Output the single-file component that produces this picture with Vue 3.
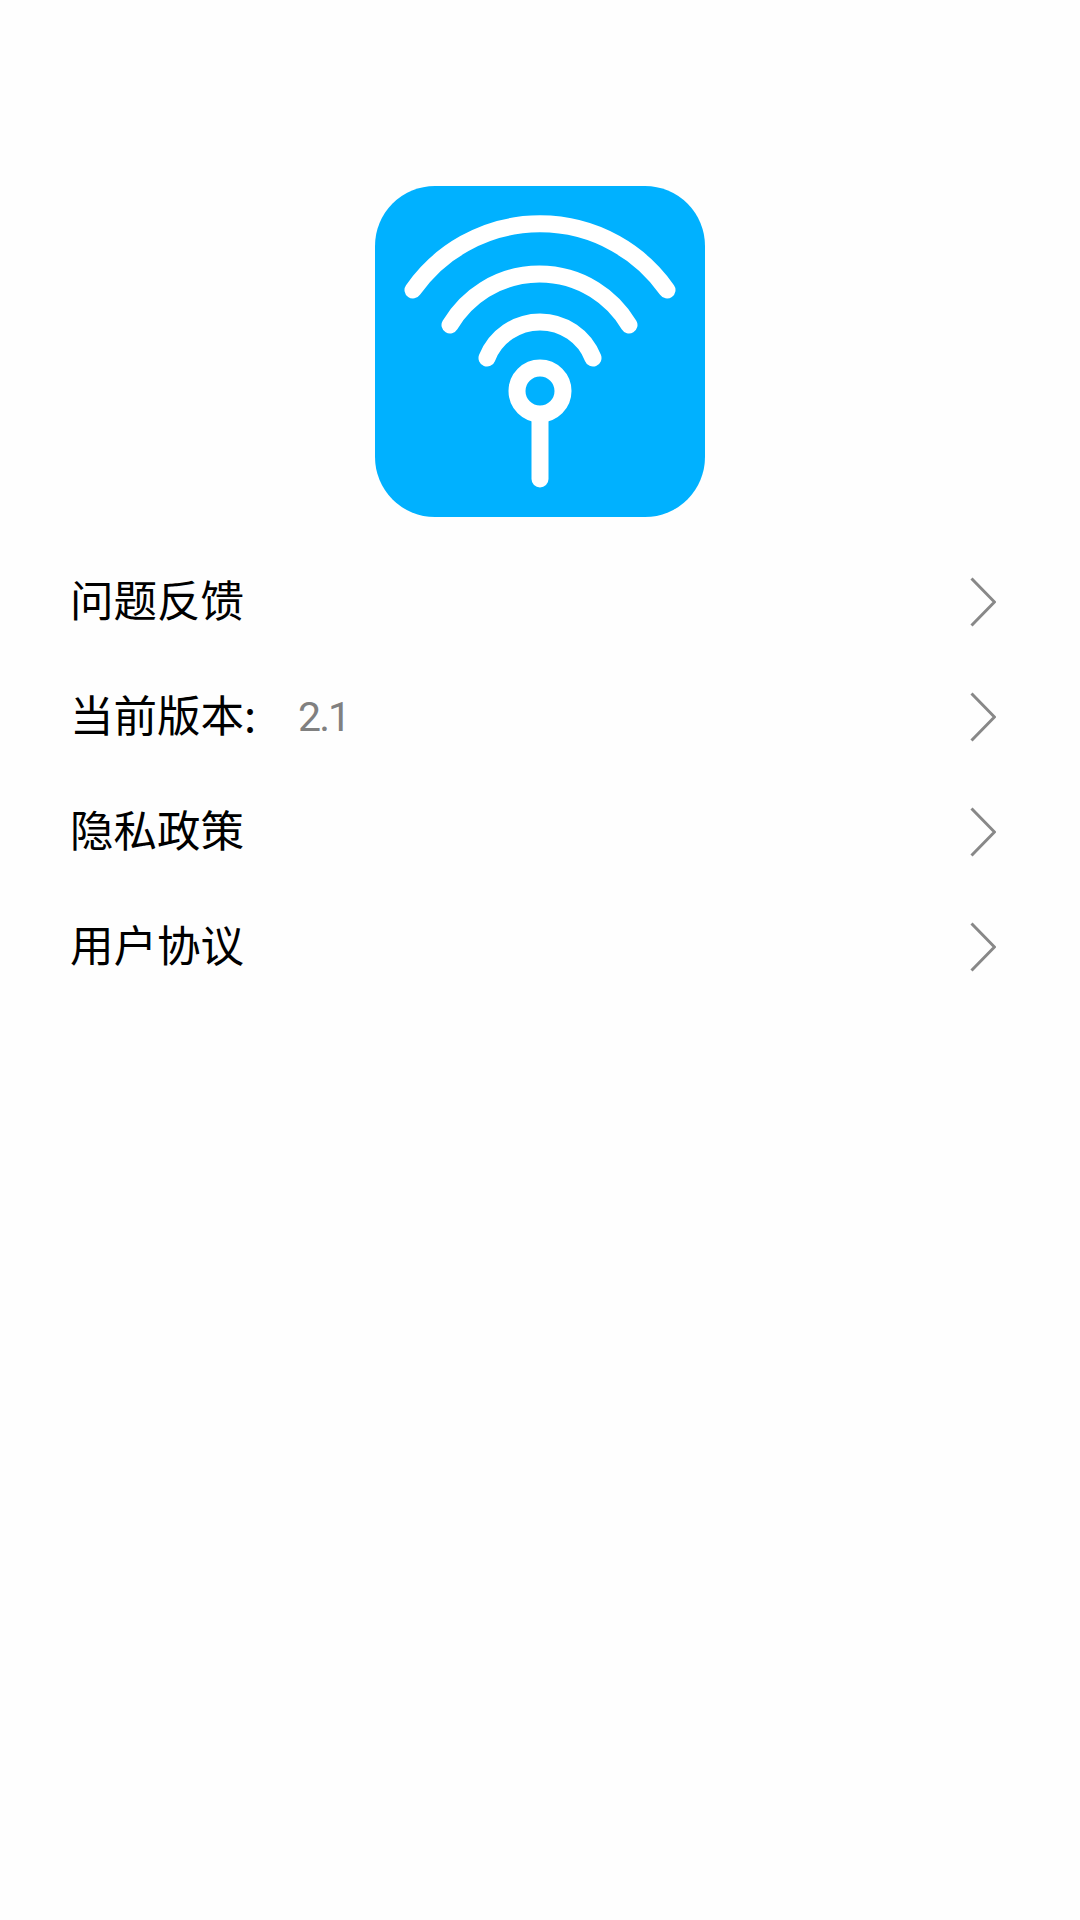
<script setup>
const rows = [
  { label: '问题反馈' },
  { label: '当前版本:', value: '2.1' },
  { label: '隐私政策' },
  { label: '用户协议' },
]
</script>

<template>
  <div class="page">
    <svg class="logo" viewBox="15 16 330 331" width="330" height="331">
      <rect x="15" y="16" width="330" height="331" rx="60" fill="#00b1ff" />
      <g fill="none" stroke="#fff" stroke-width="17" stroke-linecap="round">
        <path d="M53 120A155 155 0 0 1 307 120" />
        <path d="M90 155A104 104 0 0 1 269 155" />
        <path d="M127 188A57 57 0 0 1 233 188" />
        <circle cx="180" cy="221" r="23" />
        <path d="M180 250V309" />
      </g>
    </svg>
    <div class="list">
      <div v-for="row in rows" :key="row.label" class="row">
        <span class="label">{{ row.label }}</span>
        <span v-if="row.value" class="value">{{ row.value }}</span>
        <svg class="chevron" viewBox="0 0 26 50" width="26" height="50">
          <path d="M1.5 1.5L24.5 25L1.5 48.5" fill="none" stroke="#888" stroke-width="3" />
        </svg>
      </div>
    </div>
  </div>
</template>

<style>
html, body { background: #fff; }
</style>

<style scoped>
.page {
  width: 1080px;
  height: 1920px;
  box-sizing: border-box;
  padding-top: 186px;
  background: #fefefe;
  display: flex;
  flex-direction: column;
  align-items: center;
  overflow: hidden;
}
.logo { display: block; filter: blur(0.6px); }
.list {
  width: 100%;
  margin-top: 27px;
  box-sizing: border-box;
  padding: 0 84px 0 70px;
}
.row {
  height: 115px;
  display: flex;
  align-items: center;
}
.label {
  font: 400 43.5px/60px "Noto Sans CJK SC", sans-serif;
  color: #000;
  padding-bottom: 5px;
}
.value {
  margin-left: 42px;
  font: 400 41px/60px Roboto, sans-serif;
  letter-spacing: -2px;
  color: #808080;
}
.chevron { margin-left: auto; display: block; }
</style>
